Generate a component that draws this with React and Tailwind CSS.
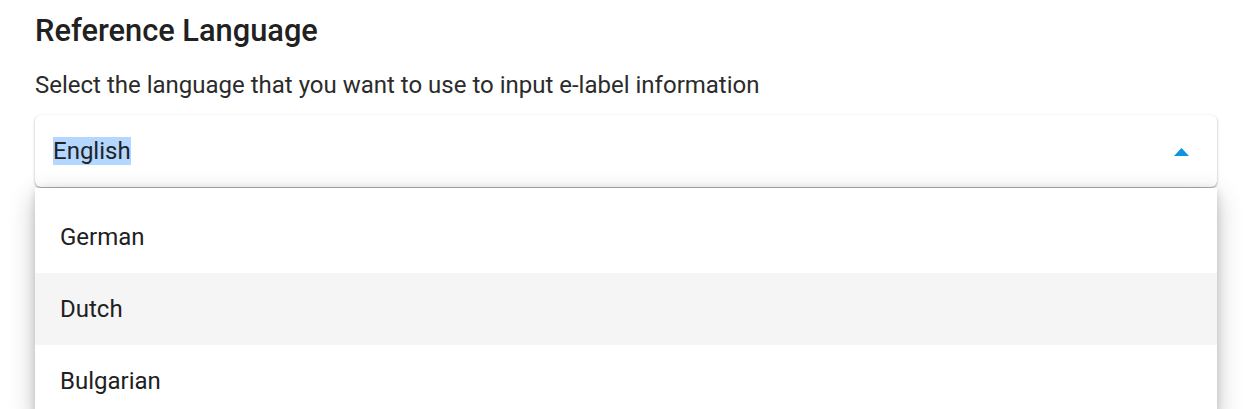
import React from "react";

export default function App() {
  const items = ["German", "Dutch", "Bulgarian"];
  return (
    <div className="w-[1253px] h-[409px] overflow-hidden bg-white text-[#212121]" style={{ fontFamily: "Roboto, 'Noto Sans', sans-serif" }}>
      <div className="pl-[35px] pr-[36px] pt-[13px]">
        <h1 className="text-[30.8px] leading-[36px] font-medium">Reference Language</h1>
        <p className="mt-[20px] text-[24px] leading-[32px] text-[#2b2b2b]">Select the language that you want to use to input e-label information</p>
        <div className="relative mt-[14px]">
          <div className="h-[72px] rounded-[6px] bg-white flex items-center justify-between pl-[18px] pr-[28px] shadow-[0_1px_3px_rgba(0,0,0,0.25),0_1px_1px_rgba(0,0,0,0.2)]">
            <span className="text-[24px] leading-[28px] bg-[#b3d7fe] text-[#1f2328]">English</span>
            <svg width="15" height="8" viewBox="0 0 15 8" className="mt-[1px]">
              <path d="M0 8 L7.5 0 L15 8 Z" fill="#0b93e5" />
            </svg>
          </div>
          <div className="absolute left-0 right-0 top-[73px] bg-white pt-[13px] shadow-[0_8px_24px_rgba(0,0,0,0.24),0_2px_8px_rgba(0,0,0,0.14)]">
            {items.map((it, i) => (
              <div key={it} className={`h-[72px] flex items-center pl-[25px] text-[24px] ${i === 1 ? "bg-[#f5f5f5]" : "bg-white"}`}>
                {it}
              </div>
            ))}
          </div>
        </div>
      </div>
    </div>
  );
}
